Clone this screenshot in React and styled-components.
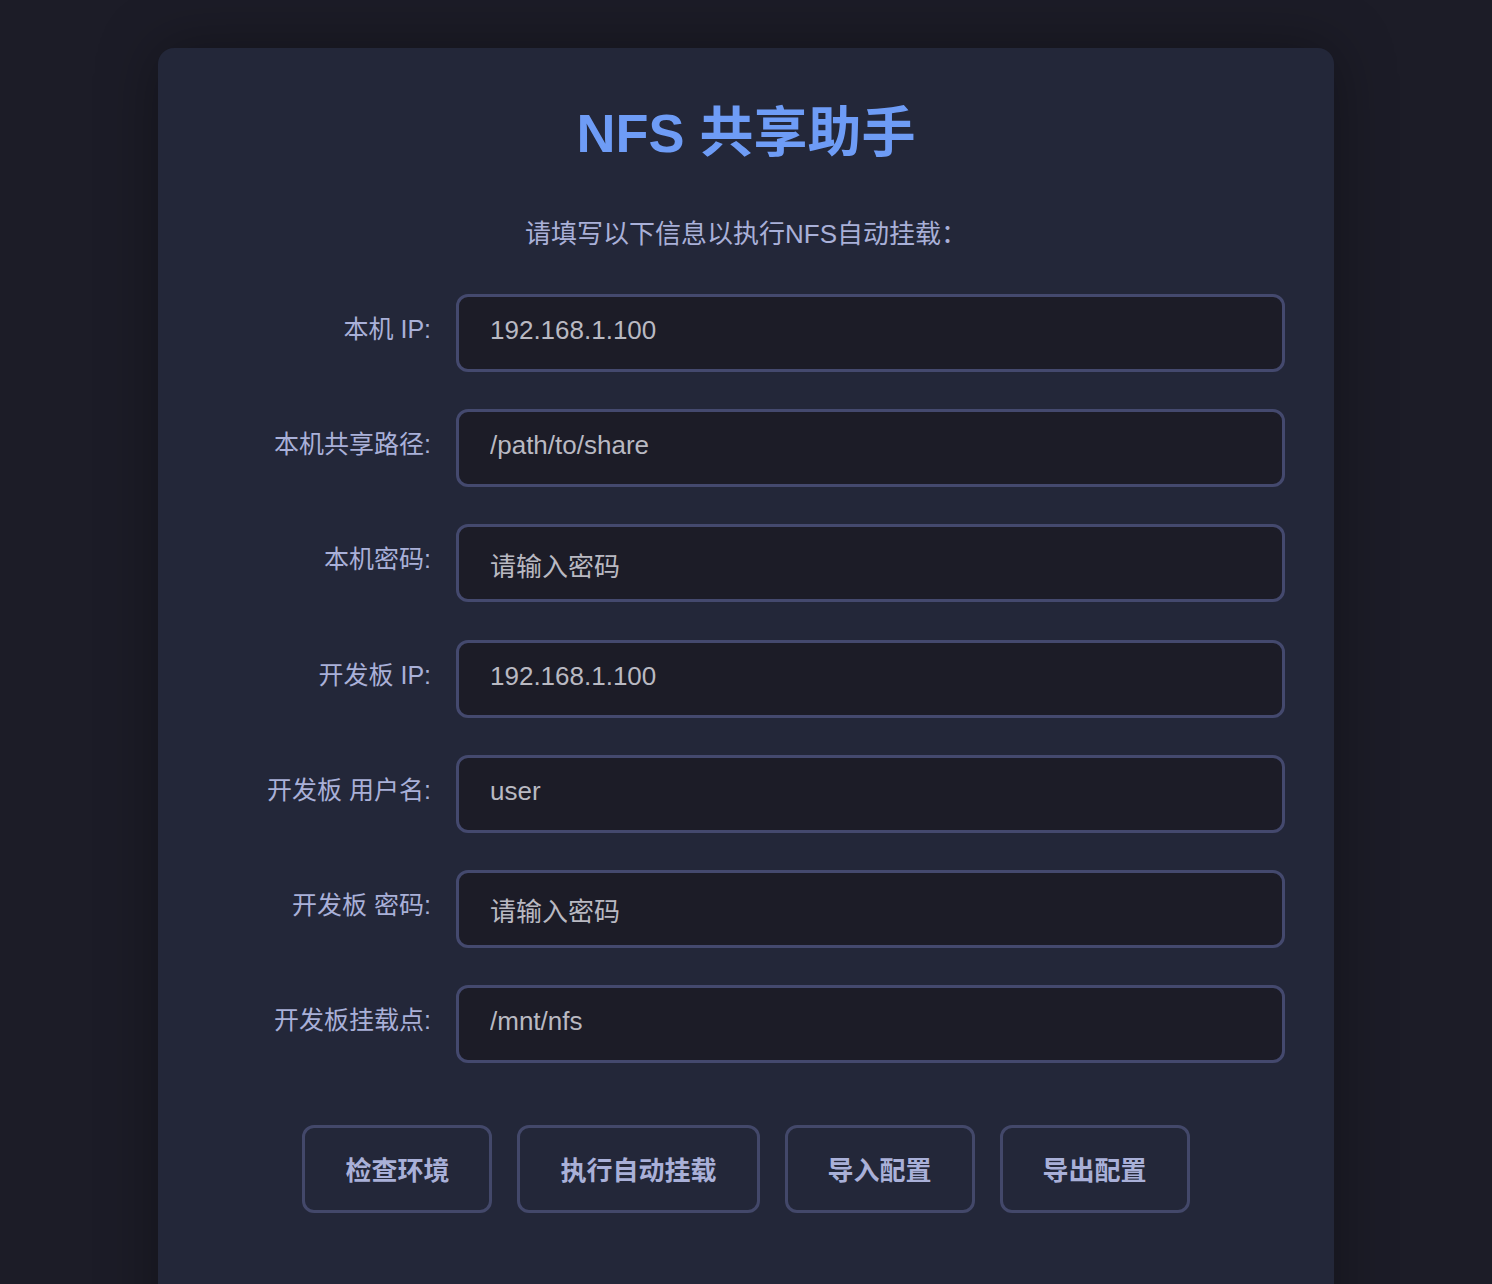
import React from "react";
import styled, { createGlobalStyle } from "styled-components";

const Global = createGlobalStyle`
  html, body { margin: 0; padding: 0; background: #1c1c27; }
  body {
    font-family: "Liberation Sans", "Noto Sans CJK SC", sans-serif;
    color: #a9b0d8;
  }
  * { box-sizing: border-box; }
`;

const Page = styled.div`
  padding: 48px 0 60px;
`;

const Card = styled.div`
  width: 1176px;
  margin: 0 auto;
  background: #232739;
  border-radius: 16px;
  box-shadow: 0 0 60px rgba(0, 0, 0, 0.35);
  padding: 52px 49px 200px;
  display: flex;
  flex-direction: column;
  align-items: center;
`;

const Title = styled.h1`
  margin: 0;
  font-size: 54px;
  line-height: 66px;
  font-weight: 700;
  color: #6e9cf6;
  text-align: center;
`;

const Subtitle = styled.p`
  margin: 51px 0 0;
  font-size: 26px;
  line-height: 34px;
  color: #a9b0d8;
  text-align: center;
`;

const Form = styled.div`
  margin-top: 43px;
  width: 100%;
  display: grid;
  grid-template-columns: 224px 1fr;
  column-gap: 25px;
  row-gap: 37.2px;
  align-items: start;
`;

const Label = styled.label`
  font-size: 25px;
  line-height: 30px;
  padding-top: 20px;
  text-align: right;
  color: #a9b0d8;
  white-space: nowrap;
`;

const Input = styled.input`
  width: 100%;
  height: 78px;
  background: #1c1c27;
  border: 3px solid #44496e;
  border-radius: 12px;
  padding: ${(p) => (p.$lowered ? "8px 0 0 31px" : "0 0 5px 31px")};
  font-family: "Liberation Sans", "Noto Sans CJK SC", sans-serif;
  font-size: 26px;
  color: #b9b9c2;
  outline: none;
  &::placeholder {
    color: #b9b9c2;
    opacity: 1;
  }
`;

const Actions = styled.div`
  margin-top: 62px;
  display: flex;
  gap: 25px;
  justify-content: center;
`;

const Button = styled.button`
  height: 88px;
  padding: 0 40px 2px;
  background: transparent;
  border: 3px solid #43486a;
  border-radius: 12px;
  font-family: "Liberation Sans", "Noto Sans CJK SC", sans-serif;
  font-size: 26px;
  font-weight: 700;
  color: #a9b0d8;
  cursor: pointer;
`;

const fields = [
  { label: "本机 IP:", value: "192.168.1.100" },
  { label: "本机共享路径:", value: "/path/to/share" },
  { label: "本机密码:", placeholder: "请输入密码", type: "password" },
  { label: "开发板 IP:", value: "192.168.1.100" },
  { label: "开发板 用户名:", value: "user" },
  { label: "开发板 密码:", placeholder: "请输入密码", type: "password" },
  { label: "开发板挂载点:", value: "/mnt/nfs" },
];

export default function App() {
  return (
    <Page>
      <Global />
      <Card>
        <Title>NFS 共享助手</Title>
        <Subtitle>请填写以下信息以执行NFS自动挂载：</Subtitle>
        <Form>
          {fields.map((f, i) => (
            <React.Fragment key={i}>
              <Label>{f.label}</Label>
              <Input
                type={f.type || "text"}
                defaultValue={f.value}
                placeholder={f.placeholder}
                $lowered={f.type === "password"}
              />
            </React.Fragment>
          ))}
        </Form>
        <Actions>
          <Button>检查环境</Button>
          <Button>执行自动挂载</Button>
          <Button>导入配置</Button>
          <Button>导出配置</Button>
        </Actions>
      </Card>
    </Page>
  );
}
